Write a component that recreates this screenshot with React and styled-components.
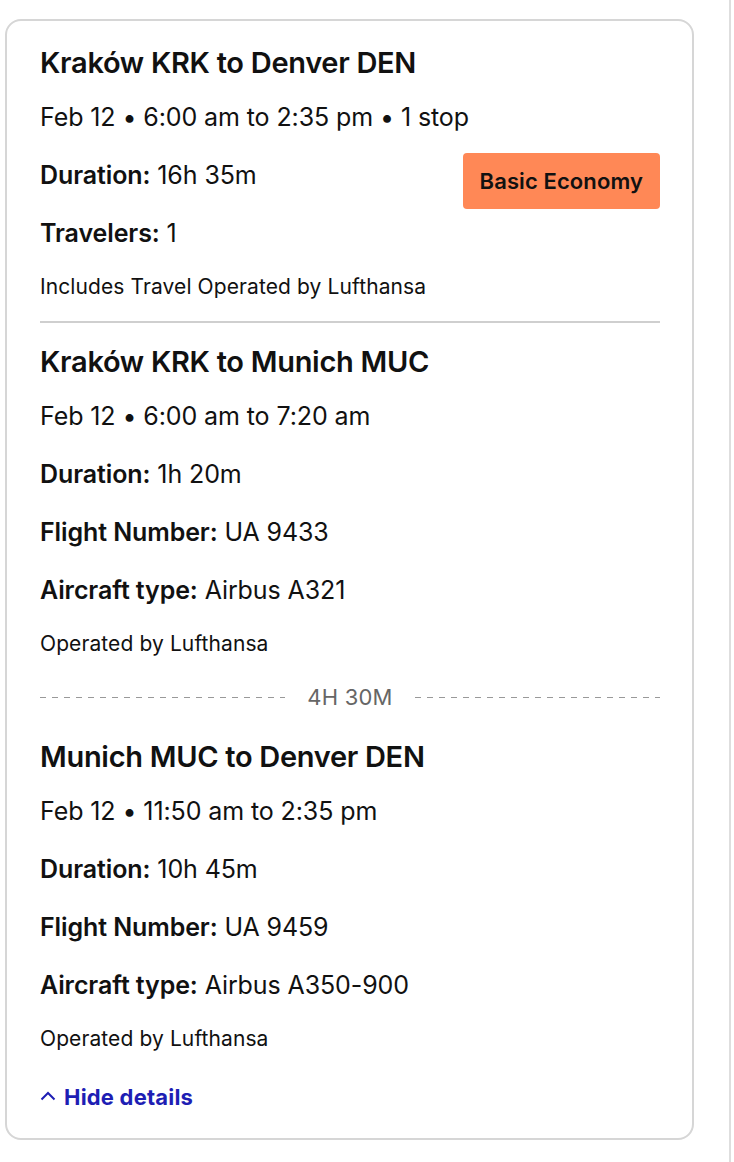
import React from 'react';
import styled, { createGlobalStyle } from 'styled-components';

const GlobalStyle = createGlobalStyle`
  body {
    margin: 0;
    background: #fff;
    font-family: "Inter", "Roboto", "Liberation Sans", sans-serif;
    color: #111;
  }
`;

const Page = styled.div`
  width: 731px;
  min-height: 1162px;
  box-sizing: border-box;
  border-right: 2px solid #dedede;
  padding: 19px 0 0 5px;
`;

const Card = styled.div`
  width: 689px;
  box-sizing: border-box;
  border: 2px solid #d6d6d6;
  border-radius: 16px;
  padding: 17px 32px 12px 33px;
`;

const Title = styled.h2`
  margin: ${p => p.$top || 0}px 0 0;
  height: 50px;
  line-height: 50px;
  font-size: 29px;
  font-weight: 600;
  letter-spacing: -0.3px;
  white-space: nowrap;
`;

const Row = styled.div`
  display: flex;
  justify-content: space-between;
  align-items: flex-start;
  height: 58px;
  line-height: 58px;
  font-size: 25px;
  letter-spacing: -0.1px;
  white-space: nowrap;

  b {
    font-weight: 600;
  }
`;

const Note = styled.div`
  height: 50px;
  line-height: 50px;
  font-size: 21px;
  letter-spacing: 0.1px;
`;

const Badge = styled.span`
  margin: 7px 0 -5px;
  height: 56px;
  line-height: 56px;
  padding: 0 17px;
  border-radius: 4px;
  background: #ff8856;
  font-size: 22px;
  font-weight: 600;
  letter-spacing: 0.1px;
`;

const Divider = styled.hr`
  margin: 9px 0 0;
  border: 0;
  height: 2px;
  background: #cfcfcf;
`;

const Layover = styled.div`
  display: flex;
  align-items: center;
  height: 40px;
  margin-top: 8px;
  color: #666;
  font-size: 22px;
  letter-spacing: 0.2px;

  &::before,
  &::after {
    content: "";
    flex: 1;
    height: 1px;
    background: repeating-linear-gradient(to right, #999 0 6px, transparent 6px 12px);
  }

  span {
    padding: 0 22px;
  }
`;

const Toggle = styled.button`
  display: flex;
  align-items: center;
  gap: 8px;
  margin-top: 4px;
  height: 58px;
  padding: 0;
  border: 0;
  background: none;
  color: #1e1eb4;
  font-family: inherit;
  font-size: 22px;
  font-weight: 700;
  letter-spacing: 0.2px;
  cursor: pointer;

  svg {
    margin-top: -3px;
  }
`;

const legs = [
  {
    title: 'Kraków KRK to Munich MUC',
    time: 'Feb 12 • 6:00 am to 7:20 am',
    duration: '1h 20m',
    flight: 'UA 9433',
    aircraft: 'Airbus A321',
  },
  {
    title: 'Munich MUC to Denver DEN',
    time: 'Feb 12 • 11:50 am to 2:35 pm',
    duration: '10h 45m',
    flight: 'UA 9459',
    aircraft: 'Airbus A350-900',
  },
];

function Leg({ leg, top }) {
  return (
    <>
      <Title $top={top}>{leg.title}</Title>
      <Row>{leg.time}</Row>
      <Row><span><b>Duration:</b> {leg.duration}</span></Row>
      <Row><span><b>Flight Number:</b> {leg.flight}</span></Row>
      <Row><span><b>Aircraft type:</b> {leg.aircraft}</span></Row>
      <Note>Operated by Lufthansa</Note>
    </>
  );
}

export default function App() {
  return (
    <>
      <GlobalStyle />
      <Page>
        <Card>
          <Title>Kraków KRK to Denver DEN</Title>
          <Row>Feb 12 • 6:00 am to 2:35 pm • 1 stop</Row>
          <Row>
            <span><b>Duration:</b> 16h 35m</span>
            <Badge>Basic Economy</Badge>
          </Row>
          <Row><span><b>Travelers:</b> 1</span></Row>
          <Note>Includes Travel Operated by Lufthansa</Note>
          <Divider />
          <Leg leg={legs[0]} top={14} />
          <Layover><span>4H 30M</span></Layover>
          <Leg leg={legs[1]} top={15} />
          <Toggle>
            <svg width="16" height="16" viewBox="0 0 16 16" fill="none">
              <path d="M1.5 11.5 L8 5 L14.5 11.5" stroke="currentColor" strokeWidth="2" />
            </svg>
            Hide details
          </Toggle>
        </Card>
      </Page>
    </>
  );
}
